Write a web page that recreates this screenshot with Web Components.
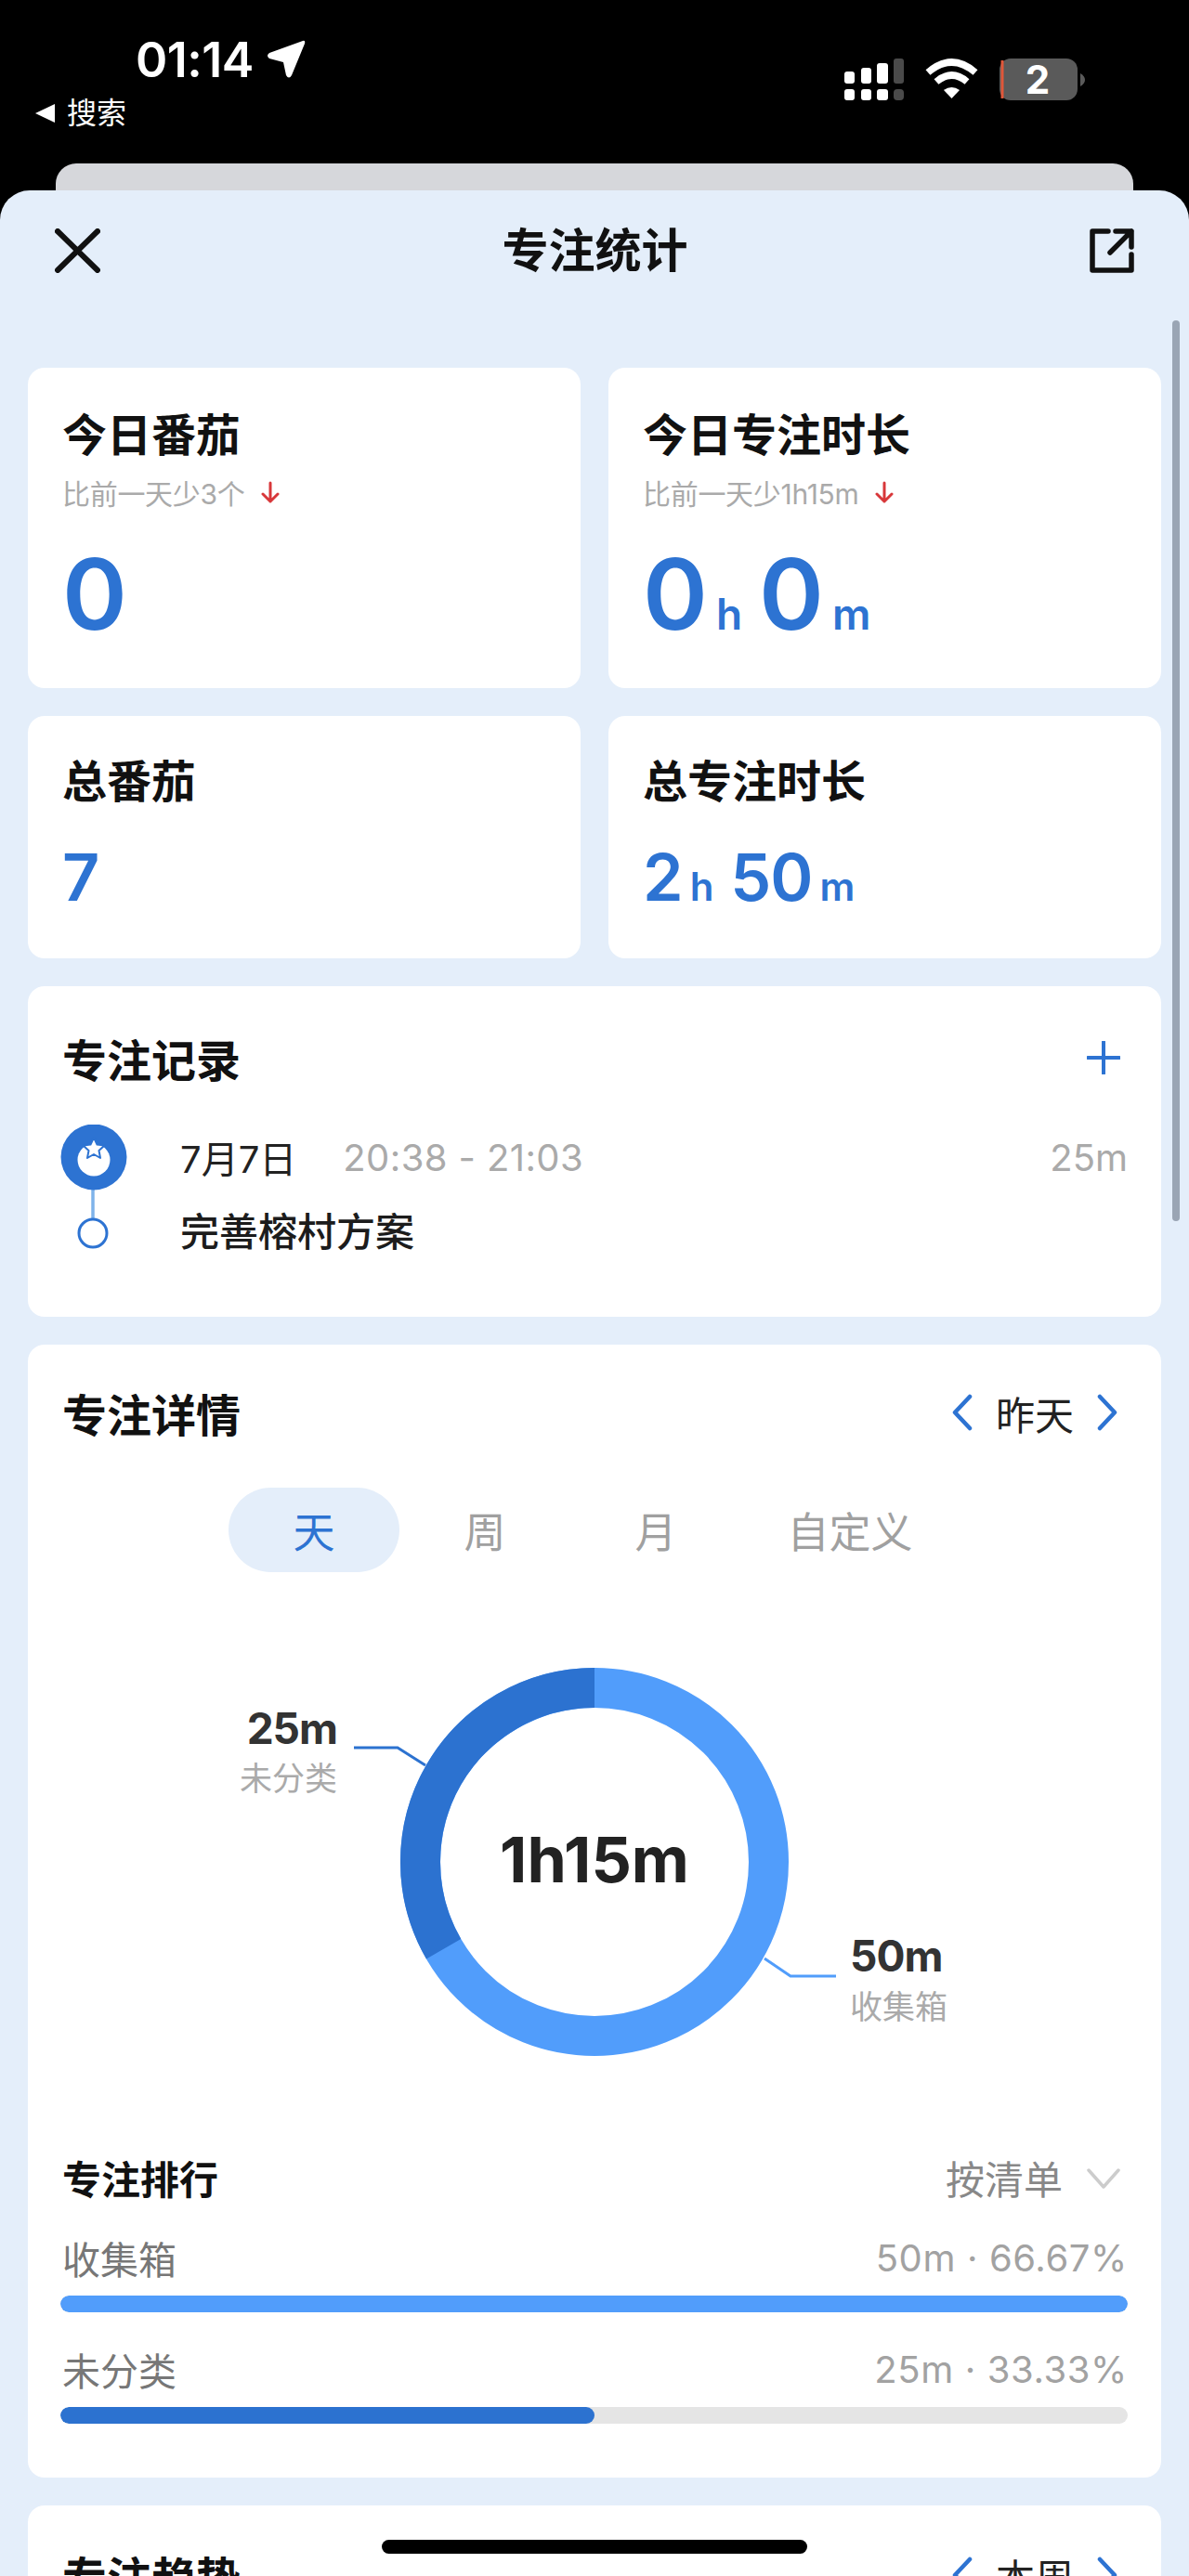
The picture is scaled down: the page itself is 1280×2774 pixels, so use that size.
<!DOCTYPE html>
<html lang="zh">
<head>
<meta charset="utf-8">
<title>专注统计</title>
<style>
  html, body { margin: 0; height: 2774px; overflow: hidden; background: #000; }
  body { font-family: Inter, "Noto Sans CJK SC", sans-serif; display: flex; flex-direction: column; }
</style>
</head>
<body>
<status-bar></status-bar>
<focus-sheet>
  <sheet-header title="专注统计"></sheet-header>
  <div style="display:grid;grid-template-columns:595px 595px;gap:30px">
    <stat-card label="今日番茄" sub="比前一天少3个" size="large"><dur-value v="0"></dur-value></stat-card>
    <stat-card label="今日专注时长" sub="比前一天少1h15m" size="large"><dur-value v="0 h 0 m"></dur-value></stat-card>
    <stat-card label="总番茄"><dur-value small v="7"></dur-value></stat-card>
    <stat-card label="总专注时长"><dur-value small v="2 h 50 m"></dur-value></stat-card>
  </div>
  <record-card></record-card>
  <detail-card></detail-card>
  <trend-card></trend-card>
</focus-sheet>

<script>
const BLUE = "#2d73d2";
const LIGHT = "#519dfb";
const FONT = `Inter, "Noto Sans CJK SC", sans-serif`;

// chevrons used by both date pickers
const chevron = (dir) => `<svg width="26" height="40" viewBox="0 0 26 40" fill="none" stroke="${BLUE}" stroke-width="4.5" stroke-linecap="round" stroke-linejoin="round"><path d="${dir === "l" ? "M21 3 L5 20 L21 37" : "M5 3 L21 20 L5 37"}"/></svg>`;

class StatusBar extends HTMLElement {
    constructor() {
        super();
        this.root = this.attachShadow({ mode: "open" });
        this.root.innerHTML = `
        <style>
            :host { display: flex; flex: none; height: 176px; background: #000; color: #fff; justify-content: space-between; font-family: ${FONT}; }
            .left { padding: 36px 0 0 38px; }
            .time { display: flex; align-items: center; padding-left: 108px; height: 56px; font-size: 52px; font-weight: 600; letter-spacing: -0.5px; gap: 14px; }
            .back { display: flex; align-items: center; gap: 13px; height: 40px; margin-top: 10px; font-size: 32px; line-height: 40px; }
            .right { padding: 63px 0 0 0; margin-right: 112px; }
        </style>
        <div class="left">
            <div class="time">01:14
                <svg width="42" height="42" viewBox="0 0 42 42"><path d="M39 1 Q42 0 41 4 L27 38 Q24 43 21 38 L18 24 L3 20 Q-1 17 3 14 Z" fill="#fff"/></svg>
            </div>
            <div class="back"><svg width="21" height="20" viewBox="0 0 21 20"><path d="M0 10 L21 0 V20 Z" fill="#fff"/></svg>搜索</div>
        </div>
        <div class="right">
            <svg width="260" height="46" viewBox="908 63 260 46">
                <g fill="#fff">
                    <rect x="909" y="77" width="11" height="13" rx="3"/><rect x="927" y="73" width="11" height="17" rx="3"/><rect x="944" y="68" width="12" height="22" rx="3"/>
                    <rect x="909" y="96" width="11" height="12" rx="3"/><rect x="927" y="96" width="11" height="12" rx="3"/><rect x="944" y="96" width="12" height="12" rx="3"/>
                </g>
                <g fill="#4a4a4a"><rect x="962" y="63" width="11" height="27" rx="3"/><rect x="962" y="96" width="11" height="12" rx="4"/></g>
                <g fill="none" stroke="#fff" stroke-width="7.5">
                    <path d="M999 78 Q1024.500 56 1050 78"/><path d="M1008 88 Q1024.500 74 1041 88"/>
                </g>
                <path d="M1016 97 Q1024.500 91 1033 97 L1024.500 106 Z" fill="#fff"/>
                <rect x="1076" y="63" width="84" height="45" rx="12" fill="#5a5a5a"/>
                <path d="M1079 65 V106" stroke="#e0573a" stroke-width="3"/>
                <path d="M1163 79 Q1168 82 1168 86 Q1168 90 1163 93 Z" fill="#5a5a5a"/>
            </svg>
            <span style="position:absolute;left:1094px;top:62px;width:46px;text-align:center;font-size:42px;line-height:48px;font-weight:700">2</span>
        </div>`;
    }
}
customElements.define("status-bar", StatusBar);

class FocusSheet extends HTMLElement {
    constructor() {
        super();
        this.root = this.attachShadow({ mode: "open" });
        this.root.innerHTML = `
        <style>
            :host { display: block; flex: 1; position: relative; overflow: hidden; background: #000; font-family: ${FONT}; }
            .peek { height: 29px; margin: 0 60px; background: #d6d7db; border-radius: 22px 22px 0 0; }
            .body { box-sizing: border-box; height: 2569px; padding: 0 30px; overflow: hidden; background: #e4eefa; border-radius: 32px 32px 0 0; display: flex; flex-direction: column; gap: 30px; }
            ::slotted(*) { flex: none; }
            .scroll { position: absolute; left: 1262px; top: 169px; width: 8px; height: 970px; border-radius: 4px; background: #9aa5b4; }
            .home { position: absolute; left: 411px; top: 2559px; width: 458px; height: 15px; border-radius: 8px; background: #000; }
        </style>
        <div class="peek"></div>
        <div class="body"><slot></slot></div>
        <div class="scroll"></div>
        <div class="home"></div>`;
    }
}
customElements.define("focus-sheet", FocusSheet);

class SheetHeader extends HTMLElement {
    constructor() {
        super();
        this.root = this.attachShadow({ mode: "open" });
    }
    connectedCallback() {
        this.root.innerHTML = `
        <style>
            :host { display: flex; align-items: center; justify-content: space-between; height: 130px; margin: 0 29px 31px; color: #111; }
            h1 { margin: 0; font-size: 50px; font-weight: 700; line-height: 60px; }
            svg { display: block; }
        </style>
        <svg width="49" height="48" viewBox="0 0 49 48" fill="none" stroke="#111" stroke-width="6" stroke-linecap="round"><path d="M3 3 L46 45 M46 3 L3 45"/></svg>
        <h1>${this.getAttribute("title")}</h1>
        <svg width="48" height="48" viewBox="0 0 48 48" fill="none" stroke="#111" stroke-width="5.500" stroke-linecap="round" stroke-linejoin="round"><path d="M20 3 H3 V45 H45 V28 M28 3 H45 V20 M45 3 L22 26"/></svg>`;
    }
}
customElements.define("sheet-header", SheetHeader);

class DurValue extends HTMLElement {
    constructor() {
        super();
        this.root = this.attachShadow({ mode: "open" });
    }
    connectedCallback() {
        const small = this.hasAttribute("small");
        const big = small ? 70 : 106;
        const unit = small ? 42 : 46;
        const parts = this.getAttribute("v").split(" ").map(p =>
            /\d/.test(p) ? `<span class="n">${p}</span>` : `<span class="u">${p}</span>`).join("");
        this.root.innerHTML = `
        <style>
            :host { display: flex; align-items: baseline; color: ${BLUE}; font-weight: 600; line-height: 100px; }
            .n { font-size: ${big}px; letter-spacing: -1px; }
            .u { font-size: ${unit}px; margin: 0 ${small ? 18 : 18}px 0 ${small ? 8 : 10}px; }
        </style>${parts}`;
    }
}
customElements.define("dur-value", DurValue);

class StatCard extends HTMLElement {
    constructor() {
        super();
        this.root = this.attachShadow({ mode: "open" });
    }
    connectedCallback() {
        const sub = this.getAttribute("sub");
        const large = this.getAttribute("size") === "large";
        this.root.innerHTML = `
        <style>
            :host { display: block; box-sizing: border-box; height: ${large ? 345 : 261}px; padding: ${large ? 49 : 47}px 37px 0; background: #fff; border-radius: 18px; }
            .label { font-size: 48px; line-height: 48px; font-weight: 600; color: #111; }
            .sub { display: flex; align-items: center; gap: 18px; height: 36px; margin-top: 19px; font-size: 30px; color: #aaa; letter-spacing: -0.3px; }
            .val { margin-top: ${large ? 42 : 29}px; }
        </style>
        <div class="label">${this.getAttribute("label")}</div>
        ${sub ? `<div class="sub">${sub}<svg width="20" height="24" viewBox="0 0 20 24" fill="none" stroke="#d8373a" stroke-width="3" stroke-linecap="round" stroke-linejoin="round"><path d="M10 2 V22 M2 14 L10 22 L18 14"/></svg></div>` : ""}
        <div class="val"><slot></slot></div>`;
    }
}
customElements.define("stat-card", StatCard);

class RecordCard extends HTMLElement {
    constructor() {
        super();
        this.root = this.attachShadow({ mode: "open" });
        this.root.innerHTML = `
        <style>
            :host { display: block; box-sizing: border-box; height: 356px; padding: 53px 36px 0 37px; background: #fff; border-radius: 18px; }
            .head { display: flex; justify-content: space-between; align-items: center; height: 48px; font-size: 48px; font-weight: 600; color: #111; }
            .line { display: flex; margin: 48px 0 0 -2px; gap: 57px; }
            .txt { flex: 1; }
            .row { display: flex; align-items: center; height: 70px; font-size: 40px; color: #222; }
            .row .time { margin-left: 50px; color: #aaa; flex: 1; letter-spacing: 0.4px; }
            .row .dur { color: #aaa; }
            .name { height: 60px; margin-top: 16px; font-size: 42px; line-height: 60px; font-weight: 500; color: #1c1c1c; }
        </style>
        <div class="head">专注记录
            <svg width="36" height="36" viewBox="0 0 36 36" stroke="${BLUE}" stroke-width="4" stroke-linecap="round" style="margin-right:8px"><path d="M18 1 V35 M1 18 H35"/></svg>
        </div>
        <div class="line">
            <svg width="72" height="146" viewBox="0 0 72 146" fill="none" style="flex:none">
                <path d="M35 68 V102" stroke="#7fb3ea" stroke-width="3.500"/>
                <circle cx="36" cy="35" r="35.500" fill="${BLUE}"/>
                <circle cx="36" cy="38" r="17.500" fill="#fff"/>
                <path d="M36 14 L39.500 21.500 L47.500 22.500 L41.500 28 L43 36 L36 32 L29 36 L30.500 28 L24.500 22.500 L32.500 21.500 Z" fill="#fff" stroke="${BLUE}" stroke-width="2" stroke-linejoin="round"/>
                <circle cx="35" cy="117" r="15" fill="#fff" stroke="${BLUE}" stroke-width="3"/>
            </svg>
            <div class="txt">
                <div class="row"><span>7月7日</span><span class="time">20:38 - 21:03</span><span class="dur">25m</span></div>
                <div class="name">完善榕村方案</div>
            </div>
        </div>`;
    }
}
customElements.define("record-card", RecordCard);

class DatePicker extends HTMLElement {
    constructor() {
        super();
        this.root = this.attachShadow({ mode: "open" });
    }
    connectedCallback() {
        this.root.innerHTML = `
        <style>
            :host { display: flex; align-items: center; gap: 23px; font-size: 42px; font-weight: 400; color: #222; margin-right: 9px; }
        </style>
        ${chevron("l")}<span style="width:84px;text-align:center">${this.getAttribute("label")}</span>${chevron("r")}`;
    }
}
customElements.define("date-picker", DatePicker);

class RankRow extends HTMLElement {
    constructor() {
        super();
        this.root = this.attachShadow({ mode: "open" });
    }
    connectedCallback() {
        this.root.innerHTML = `
        <style>
            :host { display: block; }
            .t { display: flex; justify-content: space-between; align-items: center; height: 48px; font-size: 41px; color: #777; }
            .v { font-size: 40px; color: #a2a2a2; letter-spacing: 0.6px; }
            .track { height: 18px; margin: 17px 0 0 -2px; border-radius: 9px; background: #e5e5e5; overflow: hidden; }
            .fill { height: 100%; border-radius: 9px; background: ${this.getAttribute("color")}; width: ${this.getAttribute("pct")}; }
        </style>
        <div class="t"><span>${this.getAttribute("name")}</span><span class="v">${this.getAttribute("value")}</span></div>
        <div class="track"><div class="fill"></div></div>`;
    }
}
customElements.define("rank-row", RankRow);

class DetailCard extends HTMLElement {
    constructor() {
        super();
        this.root = this.attachShadow({ mode: "open" });
        // arcs in page coordinates, centre 640,2006 r 187.5
        this.root.innerHTML = `
        <style>
            :host { display: block; box-sizing: border-box; height: 1220px; padding: 49px 36px 0 37px; background: #fff; border-radius: 18px; }
            .head { display: flex; justify-content: space-between; align-items: center; height: 48px; font-size: 48px; font-weight: 600; color: #111; }
            .tabs { display: flex; height: 91px; margin: 57px 0 0 179px; font-size: 45px; color: #a0a0a0; }
            .tabs span { width: 184px; display: flex; align-items: center; justify-content: center; border-radius: 46px; }
            .tabs .on { background: #e4eefa; color: ${BLUE}; }
            .tabs .wide { width: 234px; }
            .canvas { position: relative; height: 627px; margin: 0 -36px 0 -37px; }
            .canvas svg { position: absolute; left: 0; top: 0; }
            .lb { position: absolute; line-height: 50px; white-space: nowrap; }
            .num { font-size: 46px; font-weight: 700; color: #333; letter-spacing: -1px; }
            .cat { font-size: 35px; color: #aaa; }
            .mid { position: absolute; left: 0; right: 0; top: 279px; text-align: center; font-size: 68px; line-height: 60px; font-weight: 700; color: #222; }
            .sort { display: flex; align-items: center; font-size: 42px; font-weight: 400; color: #888; }
            .rank { display: flex; justify-content: space-between; align-items: center; height: 48px; font-size: 42px; font-weight: 600; color: #111; }
            rank-row { margin-top: 39px; }
            rank-row + rank-row { margin-top: 37px; }
        </style>
        <div class="head">专注详情<date-picker label="昨天"></date-picker></div>
        <div class="tabs"><span class="on">天</span><span>周</span><span>月</span><span class="wide">自定义</span></div>
        <div class="canvas">
            <svg width="1220" height="627" viewBox="30 1694 1220 627" fill="none">
                <circle cx="640" cy="2006" r="187.500" stroke="${LIGHT}" stroke-width="43"/>
                <path d="M640 1818.500 A187.500 187.500 0 0 0 477.600 2099.750" stroke="#2c72d0" stroke-width="43"/>
                <path d="M381 1883 H428 L458 1902" stroke="#2c72d0" stroke-width="3"/>
                <path d="M823 2110 L851 2129 H900" stroke="${LIGHT}" stroke-width="3"/>
            </svg>
            <div class="mid">1h15m</div>
            <div class="lb num" style="right:887px;top:143px">25m</div>
            <div class="lb cat" style="right:887px;top:197px">未分类</div>
            <div class="lb num" style="left:885px;top:388px">50m</div>
            <div class="lb cat" style="left:885px;top:443px">收集箱</div>
        </div>
        <div class="rank">专注排行
            <div class="sort">按清单<svg width="36" height="22" viewBox="0 0 36 22" fill="none" stroke="#ccc" stroke-width="3.500" stroke-linecap="round" stroke-linejoin="round" style="margin:4px 8px 0 26px"><path d="M2 2 L18 20 L34 2"/></svg></div>
        </div>
        <rank-row name="收集箱" value="50m · 66.67%" pct="100%" color="${LIGHT}"></rank-row>
        <rank-row name="未分类" value="25m · 33.33%" pct="50%" color="#2c72d0"></rank-row>`;
    }
}
customElements.define("detail-card", DetailCard);

class TrendCard extends HTMLElement {
    constructor() {
        super();
        this.root = this.attachShadow({ mode: "open" });
        this.root.innerHTML = `
        <style>
            :host { display: block; box-sizing: border-box; flex: none; height: 300px; padding: 51px 36px 0 37px; background: #fff; border-radius: 18px; }
            .head { display: flex; justify-content: space-between; align-items: center; height: 48px; font-size: 48px; font-weight: 600; color: #111; }
        </style>
        <div class="head">专注趋势<date-picker label="本周"></date-picker></div>`;
    }
}
customElements.define("trend-card", TrendCard);
</script>
</body>
</html>
